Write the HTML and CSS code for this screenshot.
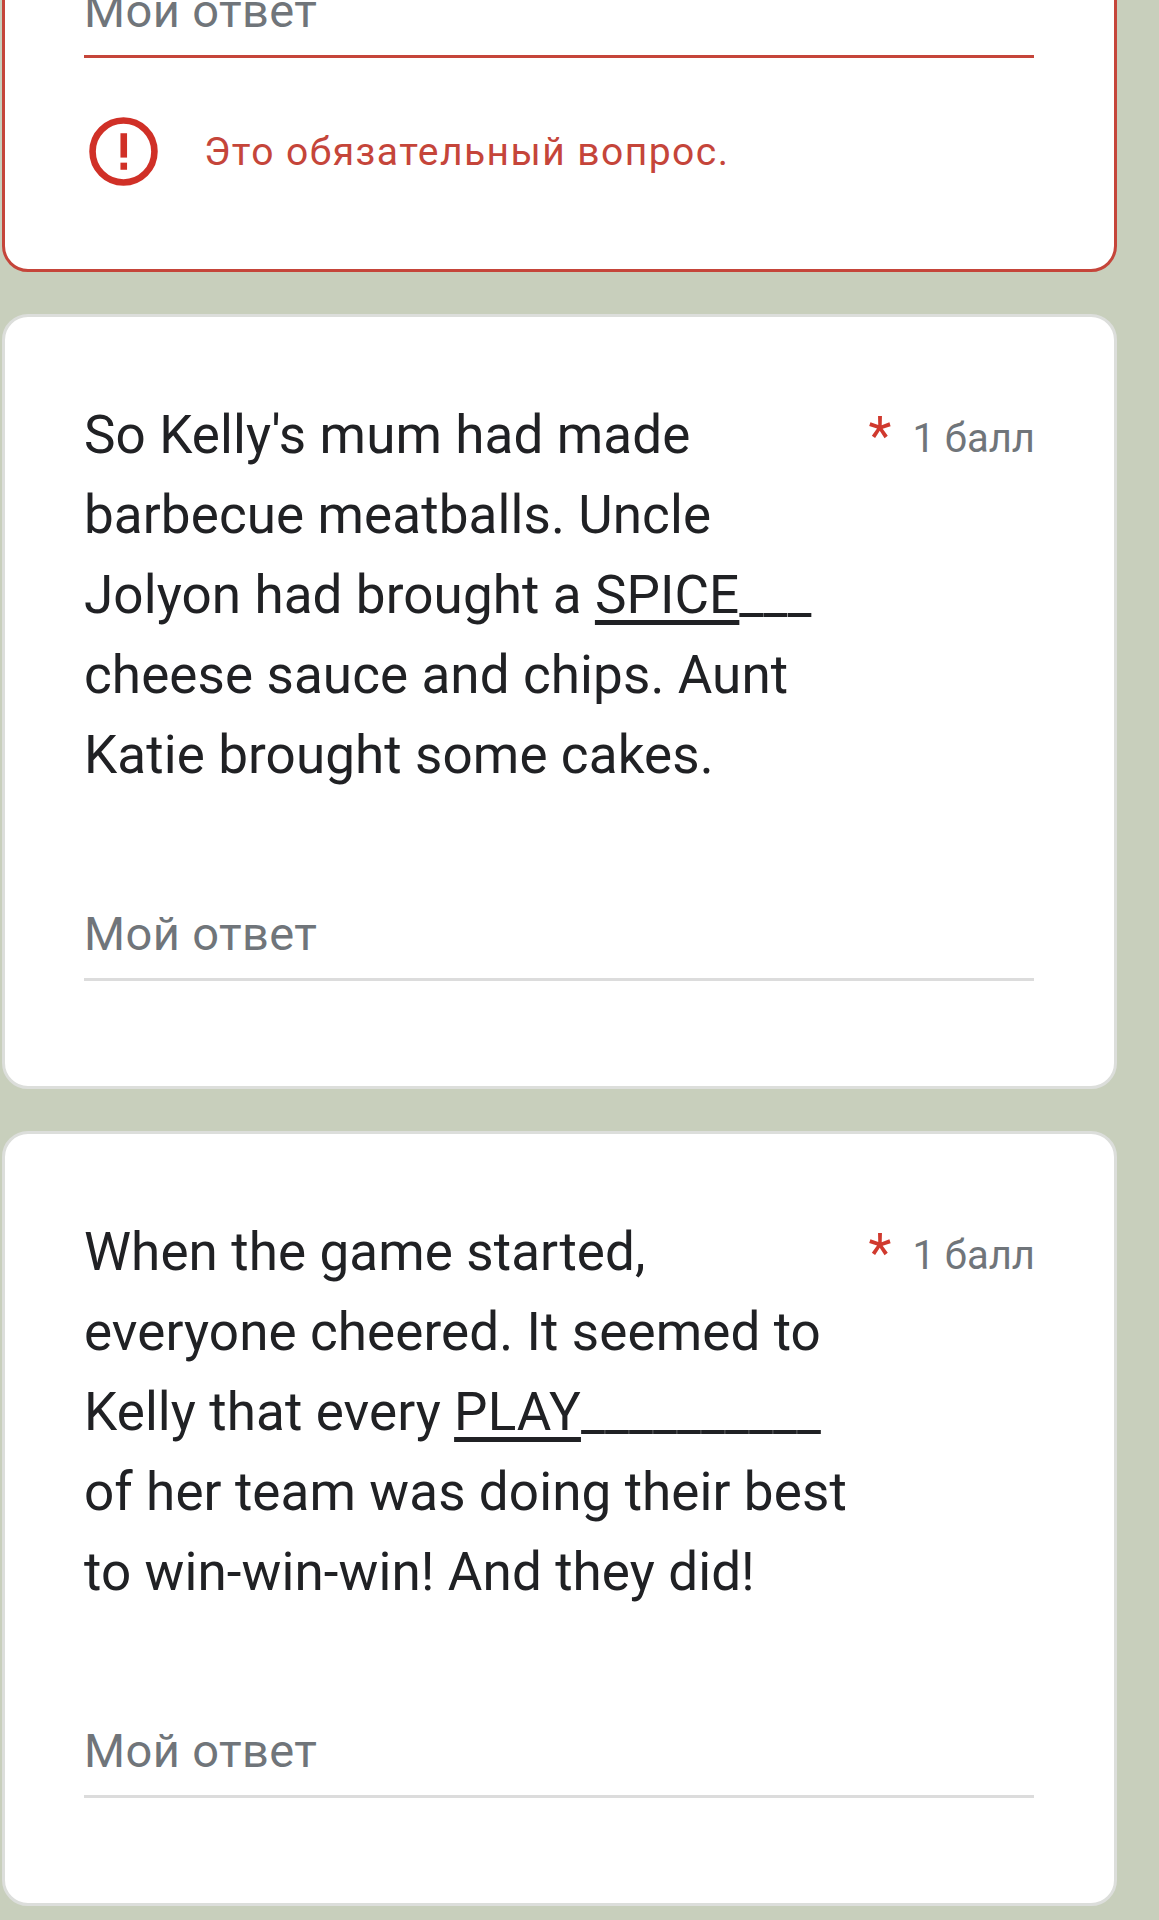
FILE: index.html
```html
<!DOCTYPE html>
<html lang="ru">
<head>
<meta charset="utf-8">
<title>Форма</title>
<link rel="stylesheet" href="styles.css">
</head>
<body>
<main class="page">
  <section class="card card-error">
    <div class="answer answer-error"><span class="placeholder">Мой ответ</span></div>
    <div class="error">
      <svg class="error-icon" viewBox="0 0 68 68" aria-hidden="true">
        <circle cx="34" cy="34" r="30.5" fill="none" stroke="#d03027" stroke-width="6.5"/>
        <rect x="31" y="16" width="6.5" height="24" fill="#d03027"/>
        <rect x="31" y="45" width="6.5" height="7" fill="#d03027"/>
      </svg>
      <span class="error-text">Это обязательный вопрос.</span>
    </div>
  </section>
  <section class="card">
    <div class="head">
      <div class="title">So Kelly's mum had made barbecue meatballs. Uncle Jolyon had brought a <u>SPICE</u>___ cheese sauce and chips. Aunt Katie brought some cakes.</div>
      <span class="star">*</span>
      <span class="points">1 балл</span>
    </div>
    <div class="answer"><span class="placeholder">Мой ответ</span></div>
  </section>
  <section class="card">
    <div class="head">
      <div class="title">When the game started, everyone cheered. It seemed to Kelly that every <u>PLAY</u>__________ of her team was doing their best to win-win-win! And they did!</div>
      <span class="star">*</span>
      <span class="points">1 балл</span>
    </div>
    <div class="answer"><span class="placeholder">Мой ответ</span></div>
  </section>
</main>
</body>
</html>
```
FILE: styles.css
```css
* { box-sizing: border-box; }
html, body { margin: 0; padding: 0; }
body {
  width: 1159px;
  height: 1920px;
  overflow: hidden;
  background: #c8cfbc;
  font-family: Roboto, "Liberation Sans", sans-serif;
}
.page {
  display: flex;
  flex-direction: column;
  gap: 42px;
  width: 1115px;
  margin-left: 2px;
  margin-top: -128px;
}
.card {
  background: #fff;
  border: 3px solid #dcdedb;
  border-radius: 26px;
  padding: 78px 80px 0 79px;
  height: 775px;
}
.card-error {
  border-color: #c5453a;
  height: 400px;
  padding-top: 99px;
}
.head { display: flex; align-items: flex-start; }
.title {
  width: 785px;
  padding-right: 16px;
  font-size: 53px;
  letter-spacing: 0.1px;
  line-height: 80px;
  color: #202124;
}
.title u { text-decoration-thickness: 5px; text-underline-offset: 7px; }
.star {
  margin-left: 2px;
  width: 44px;
  font-size: 53px;
  line-height: 82px;
  color: #d0392e;
}
.points {
  margin-left: auto;
  margin-right: -1px;
  white-space: nowrap;
  font-size: 40px;
  line-height: 88px;
  color: #70757a;
}
.answer {
  margin-top: 102px;
  height: 84px;
  border-bottom: 3px solid #dcdcdc;
}
.answer-error {
  margin-top: 0;
  border-bottom-color: #c5453a;
}
.placeholder {
  font-size: 47px;
  line-height: 74px;
  letter-spacing: 0.4px;
  color: #70757a;
}
.error {
  display: flex;
  align-items: center;
  gap: 46px;
  margin-top: 59px;
  margin-left: 5px;
}
.error-icon { width: 69px; height: 69px; flex: none; }
.error-text {
  font-size: 39px;
  letter-spacing: 1.45px;
  color: #c5453a;
}
```
